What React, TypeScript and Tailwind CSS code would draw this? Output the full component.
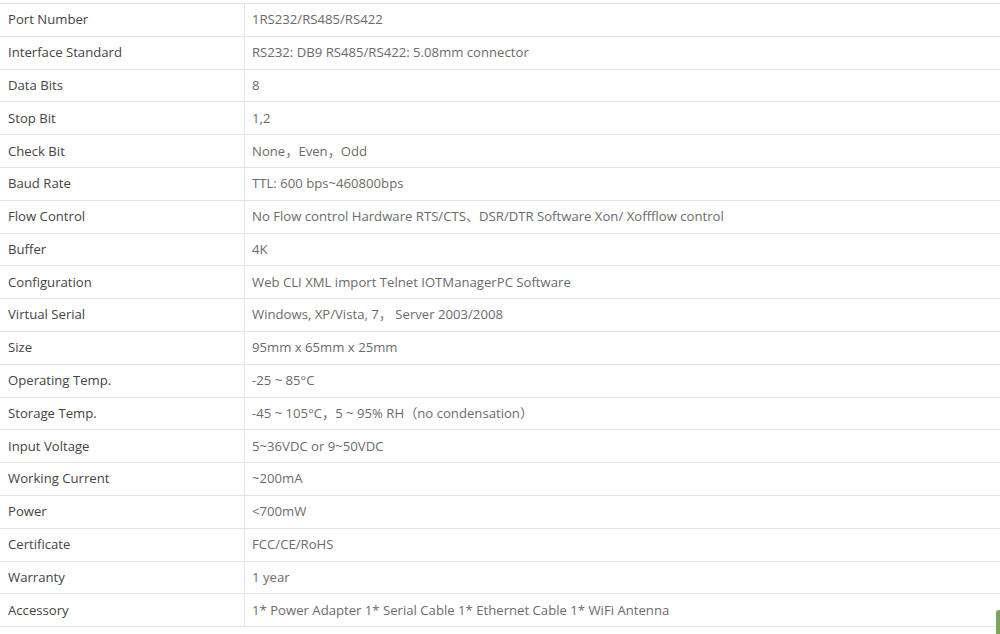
const rows: [string, string][] = [
  ["Port Number", "1RS232/RS485/RS422"],
  ["Interface Standard", "RS232: DB9 RS485/RS422: 5.08mm connector"],
  ["Data Bits", "8"],
  ["Stop Bit", "1,2"],
  ["Check Bit", "None，Even，Odd"],
  ["Baud Rate", "TTL: 600 bps~460800bps"],
  ["Flow Control", "No Flow control Hardware RTS/CTS、DSR/DTR Software Xon/ Xoffflow control"],
  ["Buffer", "4K"],
  ["Configuration", "Web CLI XML import Telnet IOTManagerPC Software"],
  ["Virtual Serial", "Windows, XP/Vista, 7， Server 2003/2008"],
  ["Size", "95mm x 65mm x 25mm"],
  ["Operating Temp.", "-25 ~ 85°C"],
  ["Storage Temp.", "-45 ~ 105°C，5 ~ 95% RH（no condensation）"],
  ["Input Voltage", "5~36VDC or 9~50VDC"],
  ["Working Current", "~200mA"],
  ["Power", "<700mW"],
  ["Certificate", "FCC/CE/RoHS"],
  ["Warranty", "1 year"],
  ["Accessory", "1* Power Adapter 1* Serial Cable 1* Ethernet Cable 1* WiFi Antenna"],
];

export default function App() {
  return (
    <div
      className="relative w-[1000px] h-[634px] bg-white overflow-hidden pt-[3px]"
      style={{ fontFamily: '"Open Sans", "Noto Sans CJK SC", sans-serif' }}
    >
      <div className="border-t border-[#e3e3e3]">
        {rows.map(([k, v]) => (
          <div key={k} className="flex h-[32.8px] border-b border-[#e3e3e3] text-[13.15px] leading-none">
            <div className="w-[245px] shrink-0 border-r border-[#e3e3e3] pl-[8px] flex items-center text-[#444]">
              {k}
            </div>
            <div className="pl-[7px] flex items-center text-[#6b6b6b]">{v}</div>
          </div>
        ))}
      </div>
      <div className="absolute right-0 top-[610px] w-[4px] h-[30px] bg-[#7aa55c] rounded-tl-[3px]" />
    </div>
  );
}
